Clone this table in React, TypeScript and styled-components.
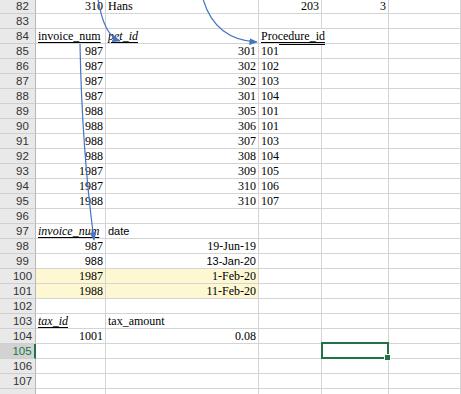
import styled, { createGlobalStyle } from 'styled-components';

type Align = 'left' | 'right';

interface CellData {
  text?: string;
  align?: Align;
  italic?: boolean;
  underline?: 'single' | 'double';
  sans?: boolean;
  fill?: boolean;
}

interface RowData {
  num: number;
  label?: boolean;
  cells: Array<CellData | null>;
  selectedCol?: number;
}

const num = (text: string, extra: Partial<CellData> = {}): CellData => ({ text, align: 'right', ...extra });
const txt = (text: string, extra: Partial<CellData> = {}): CellData => ({ text, align: 'left', ...extra });
const empty = [null, null, null, null, null];

const tableRows: Array<[string, string, string]> = [
  ['987', '301', '101'],
  ['987', '302', '102'],
  ['987', '302', '103'],
  ['987', '301', '104'],
  ['988', '305', '101'],
  ['988', '306', '101'],
  ['988', '307', '103'],
  ['988', '308', '104'],
  ['1987', '309', '105'],
  ['1987', '310', '106'],
  ['1988', '310', '107'],
];

const rows: Array<RowData> = [
  { num: 82, cells: [num('310'), txt('Hans'), num('203'), num('3'), null] },
  { num: 83, cells: empty },
  {
    num: 84,
    cells: [
      txt('invoice_num', { underline: 'single' }),
      txt('pet_id', { italic: true, underline: 'single' }),
      txt('Procedure_id', { underline: 'double' }),
      null,
      null,
    ],
  },
  ...tableRows.map(([a, b, c], i) => ({
    num: 85 + i,
    cells: [num(a), num(b), txt(c), null, null],
  })),
  { num: 96, cells: empty },
  {
    num: 97,
    cells: [txt('invoice_num', { italic: true, underline: 'single' }), txt('date', { sans: true }), null, null, null],
  },
  { num: 98, cells: [num('987'), num('19-Jun-19'), null, null, null] },
  { num: 99, cells: [num('988', { sans: true }), num('13-Jan-20', { sans: true }), null, null, null] },
  { num: 100, cells: [num('1987', { fill: true }), num('1-Feb-20', { fill: true }), null, null, null] },
  { num: 101, cells: [num('1988', { fill: true }), num('11-Feb-20', { fill: true }), null, null, null] },
  { num: 102, cells: empty },
  {
    num: 103,
    cells: [txt('tax_id', { italic: true, underline: 'single' }), txt('tax_amount'), null, null, null],
  },
  { num: 104, cells: [num('1001'), num('0.08'), null, null, null] },
  { num: 105, cells: empty, selectedCol: 3 },
  { num: 106, cells: empty },
  { num: 107, cells: empty },
  // only a sliver of this row shows at the bottom edge
  { num: 108, label: false, cells: empty },
];

const GlobalStyle = createGlobalStyle`
  html, body {
    margin: 0;
    padding: 0;
    background: #ffffff;
    overflow: hidden;
  }
`;

const App = () => (
  <>
    <GlobalStyle />
    <Sheet>
      <Grid>
        {rows.map(row => (
          <Row key={row.num}>
            <RowHeader selected={row.selectedCol !== undefined}>
              {row.label === false ? '' : row.num}
            </RowHeader>
            {row.cells.map((cell, i) => (
              <Cell key={i} fill={cell?.fill} align={cell?.align ?? 'left'}>
                {row.selectedCol === i && <Selection />}
                {cell?.text && (
                  <CellText
                    italic={cell.italic}
                    sans={cell.sans}
                    underline={cell.underline}
                  >
                    {cell.text}
                  </CellText>
                )}
              </Cell>
            ))}
          </Row>
        ))}
      </Grid>
      <Arrows width="461" height="394" viewBox="0 0 461 394">
        <defs>
          <marker id="head" viewBox="0 0 10 10" refX="9" refY="5" markerWidth="7" markerHeight="7" orient="auto">
            <path d="M0 1 L10 5 L0 9 Z" fill="#4472c4" />
          </marker>
        </defs>
        <path d="M203 -1 Q215 40 257 42" />
        <path d="M98 -1 Q104 36 120 41" />
        <path d="M80 44 Q82 150 94 240" />
      </Arrows>
    </Sheet>
  </>
);

const Sheet = styled.div`
  position: relative;
  width: 461px;
  height: 394px;
  overflow: hidden;
  background: #ffffff;
`;

const Grid = styled.div`
  display: flex;
  flex-direction: column;
  margin-top: -1px;
`;

const Row = styled.div`
  display: grid;
  grid-template-columns: 36px 70px 153px 63px 67px 1fr;
  height: 15px;
`;

const RowHeader = styled.div<{ selected?: boolean }>`
  box-sizing: border-box;
  padding-left: 10px;
  text-align: center;
  font-family: "Liberation Sans", Arial, sans-serif;
  font-size: 11.5px;
  line-height: 14px;
  color: ${p => (p.selected ? '#217346' : '#333333')};
  background: ${p => (p.selected ? '#d2d2d2' : '#e9e9e9')};
  border-bottom: 1px solid #cfcfcf;
  border-right: ${p => (p.selected ? '2px solid #217346' : '1px solid #b8b8b8')};
`;

const Cell = styled.div<{ fill?: boolean; align: Align }>`
  position: relative;
  box-sizing: border-box;
  display: flex;
  align-items: flex-end;
  justify-content: ${p => (p.align === 'right' ? 'flex-end' : 'flex-start')};
  padding: 0 2px;
  background: ${p => (p.fill ? '#fdf8d2' : '#ffffff')};
  border-right: 1px solid #d4d4d4;
  border-bottom: 1px solid #d4d4d4;
  white-space: nowrap;
`;

// text spills over the empty neighbour cell, hiding its grid line like Excel does
const CellText = styled.span<{ italic?: boolean; sans?: boolean; underline?: 'single' | 'double' }>`
  position: relative;
  z-index: 1;
  background: inherit;
  font-family: ${p => (p.sans ? '"Liberation Sans", Arial, sans-serif' : '"Liberation Serif", "Times New Roman", serif')};
  font-size: ${p => (p.sans ? '11px' : '12px')};
  font-style: ${p => (p.italic ? 'italic' : 'normal')};
  line-height: 14px;
  color: #000000;
  text-decoration: ${p => (p.underline ? 'underline' : 'none')};
  text-decoration-style: ${p => (p.underline === 'double' ? 'double' : 'solid')};
  text-decoration-thickness: 1px;
  text-underline-offset: 2px;
`;

const Selection = styled.div`
  position: absolute;
  z-index: 2;
  left: -1px;
  top: -2px;
  right: -1px;
  bottom: -1px;
  border: 2px solid #217346;

  &::after {
    content: '';
    position: absolute;
    right: -4px;
    bottom: -4px;
    width: 5px;
    height: 5px;
    background: #217346;
    border: 1px solid #ffffff;
  }
`;

const Arrows = styled.svg`
  position: absolute;
  z-index: 3;
  left: 0;
  top: 0;
  pointer-events: none;

  path:not([fill]) {
    fill: none;
    stroke: #4472c4;
    stroke-width: 1.2;
    marker-end: url(#head);
  }
`;

export default App;
